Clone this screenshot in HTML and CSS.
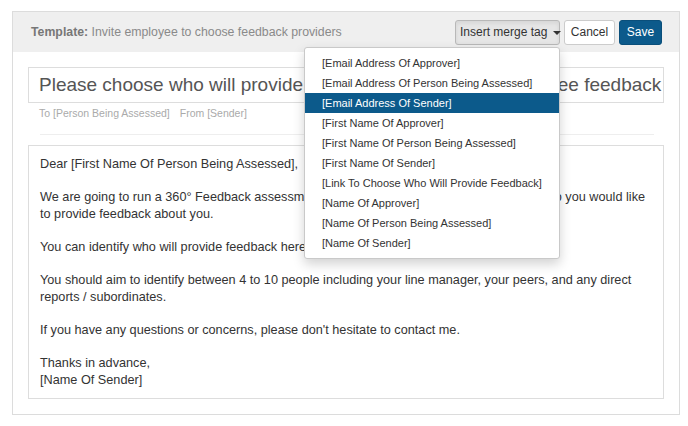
FILE: index.html
```html
<!DOCTYPE html>
<html>
<head>
<meta charset="utf-8">
<link rel="stylesheet" href="styles.css">
</head>
<body>
<div class="panel">
  <div class="header">
    <div class="title"><b>Template:</b> Invite employee to choose feedback providers</div>
    <div class="actions">
      <div class="merge">
        <button class="btn btn-merge">Insert merge tag <span class="caret"></span></button>
        <ul class="menu">
          <li>[Email Address Of Approver]</li>
          <li>[Email Address Of Person Being Assessed]</li>
          <li class="active">[Email Address Of Sender]</li>
          <li>[First Name Of Approver]</li>
          <li>[First Name Of Person Being Assessed]</li>
          <li>[First Name Of Sender]</li>
          <li>[Link To Choose Who Will Provide Feedback]</li>
          <li>[Name Of Approver]</li>
          <li>[Name Of Person Being Assessed]</li>
          <li>[Name Of Sender]</li>
        </ul>
      </div>
      <button class="btn btn-cancel">Cancel</button>
      <button class="btn btn-save">Save</button>
    </div>
  </div>
  <div class="content">
    <div class="subject">Please choose who will provide your confidential 360° employee feedback</div>
    <div class="meta"><span>To [Person Being Assessed]</span><span>From [Sender]</span></div>
    <div class="divider"></div>
    <div class="message">
      <p>Dear [First Name Of Person Being Assessed],</p>
      <p>We are going to run a 360° Feedback assessment and we would like you to help identify who you would like to provide feedback about you.</p>
      <p>You can identify who will provide feedback here: [Link]</p>
      <p>You should aim to identify between 4 to 10 people including your line manager, your peers, and any direct reports / subordinates.</p>
      <p>If you have any questions or concerns, please don't hesitate to contact me.</p>
      <p>Thanks in advance,<br>[Name Of Sender]</p>
    </div>
  </div>
</div>
</body>
</html>
```
FILE: styles.css
```css
* { box-sizing: border-box; }
html, body { margin: 0; padding: 0; background: #fff; }
body { font-family: "Liberation Sans", Arial, sans-serif; color: #333; }

.panel {
  margin: 11px 0 0 12px;
  width: 668px;
  height: 404px;
  border: 1px solid #dcdcdc;
  background: #fff;
}

.header {
  height: 40px;
  background: #efefef;
  display: flex;
  align-items: center;
  justify-content: space-between;
  padding: 0 17px 0 18px;
}
.title { font-size: 12.3px; color: #8a8a8a; }
.title b { color: #777; }

.actions { display: flex; gap: 4px; align-items: center; }
.merge { position: relative; }
.btn {
  font-family: "Liberation Sans", Arial, sans-serif;
  font-size: 12px;
  height: 25px;
  border-radius: 3px;
  border: 1px solid #ccc;
  background: #fff;
  color: #333;
  padding: 0 4px;
  margin: 0;
  white-space: nowrap;
}
.btn-merge {
  width: 105px;
  background: #e6e6e6;
  border-color: #b8b8b8;
  box-shadow: inset 0 2px 4px rgba(0,0,0,0.08);
}
.btn-cancel { width: 51px; }
.btn-save {
  width: 43px;
  background: #0c5a8b;
  border-color: #0a4f7b;
  color: #fff;
}
.caret {
  display: inline-block;
  width: 0; height: 0;
  border-left: 4px solid transparent;
  border-right: 4px solid transparent;
  border-top: 4px solid #333;
  vertical-align: middle;
  margin-left: 2px;
}

.menu {
  position: absolute;
  right: 0;
  top: 27px;
  width: 256px;
  margin: 0;
  padding: 5px 0;
  list-style: none;
  background: #fff;
  border: 1px solid #c9c9c9;
  border-radius: 3px;
  box-shadow: 0 5px 12px rgba(0,0,0,0.18);
  z-index: 10;
}
.menu li {
  height: 20px;
  line-height: 20px;
  padding-left: 17px;
  font-size: 11px;
  color: #333;
  white-space: nowrap;
}
.menu li.active { background: #0c5a8b; color: #fff; }

.content { padding: 15px 15px 0 15px; }
.subject {
  height: 36px;
  border: 1px solid #ddd;
  padding: 0 0 0 10px;
  font-size: 19px;
  line-height: 34px;
  color: #555;
  white-space: nowrap;
  overflow: hidden;
}
.meta {
  margin-top: 3px;
  padding-left: 11px;
  font-size: 10.5px;
  color: #aaa;
  display: flex;
  gap: 10px;
  line-height: 14px;
}
.divider {
  height: 1px;
  background: #eee;
  margin: 14px 10px 0 12px;
}
.message {
  margin-top: 10px;
  height: 254px;
  border: 1px solid #ddd;
  padding: 10px 12px 0 11px;
  font-size: 12.7px;
  line-height: 17px;
  color: #333;
}
.message p { margin: 0 0 16px 0; }
```
